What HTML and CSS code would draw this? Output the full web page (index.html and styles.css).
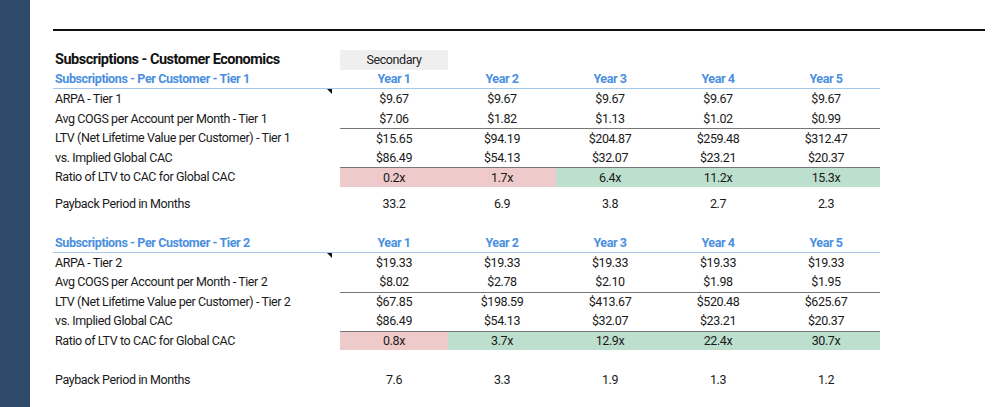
FILE: index.html
```html
<!DOCTYPE html>
<html>
<head>
<meta charset="utf-8">
<link rel="stylesheet" href="styles.css">
</head>
<body>
<div class="app">
  <div class="sidebar"></div>
  <div class="sheet">
    <div class="rule"></div>

    <div class="row title-row">
      <div class="label title">Subscriptions - Customer Economics</div>
      <div class="cell secondary">Secondary</div>
    </div>

    <div class="section">
      <div class="row head">
        <div class="label">Subscriptions - Per Customer - Tier 1</div>
        <div class="cell">Year 1</div><div class="cell">Year 2</div><div class="cell">Year 3</div><div class="cell">Year 4</div><div class="cell">Year 5</div>
      </div>
      <div class="row">
        <div class="label noted">ARPA - Tier 1<span class="note"></span></div>
        <div class="cell">$9.67</div><div class="cell">$9.67</div><div class="cell">$9.67</div><div class="cell">$9.67</div><div class="cell">$9.67</div>
      </div>
      <div class="row">
        <div class="label">Avg COGS per Account per Month - Tier 1</div>
        <div class="cell">$7.06</div><div class="cell">$1.82</div><div class="cell">$1.13</div><div class="cell">$1.02</div><div class="cell">$0.99</div>
      </div>
      <div class="row ruled">
        <div class="label">LTV (Net Lifetime Value per Customer) - Tier 1</div>
        <div class="cell">$15.65</div><div class="cell">$94.19</div><div class="cell">$204.87</div><div class="cell">$259.48</div><div class="cell">$312.47</div>
      </div>
      <div class="row">
        <div class="label">vs. Implied Global CAC</div>
        <div class="cell">$86.49</div><div class="cell">$54.13</div><div class="cell">$32.07</div><div class="cell">$23.21</div><div class="cell">$20.37</div>
      </div>
      <div class="row ruled">
        <div class="label">Ratio of LTV to CAC for Global CAC</div>
        <div class="cell bad">0.2x</div><div class="cell bad">1.7x</div><div class="cell good">6.4x</div><div class="cell good">11.2x</div><div class="cell good">15.3x</div>
      </div>
      <div class="spacer-sm"></div>
      <div class="row">
        <div class="label">Payback Period in Months</div>
        <div class="cell">33.2</div><div class="cell">6.9</div><div class="cell">3.8</div><div class="cell">2.7</div><div class="cell">2.3</div>
      </div>
    </div>

    <div class="spacer"></div>

    <div class="section">
      <div class="row head">
        <div class="label">Subscriptions - Per Customer - Tier 2</div>
        <div class="cell">Year 1</div><div class="cell">Year 2</div><div class="cell">Year 3</div><div class="cell">Year 4</div><div class="cell">Year 5</div>
      </div>
      <div class="row">
        <div class="label noted">ARPA - Tier 2<span class="note"></span></div>
        <div class="cell">$19.33</div><div class="cell">$19.33</div><div class="cell">$19.33</div><div class="cell">$19.33</div><div class="cell">$19.33</div>
      </div>
      <div class="row">
        <div class="label">Avg COGS per Account per Month - Tier 2</div>
        <div class="cell">$8.02</div><div class="cell">$2.78</div><div class="cell">$2.10</div><div class="cell">$1.98</div><div class="cell">$1.95</div>
      </div>
      <div class="row ruled">
        <div class="label">LTV (Net Lifetime Value per Customer) - Tier 2</div>
        <div class="cell">$67.85</div><div class="cell">$198.59</div><div class="cell">$413.67</div><div class="cell">$520.48</div><div class="cell">$625.67</div>
      </div>
      <div class="row">
        <div class="label">vs. Implied Global CAC</div>
        <div class="cell">$86.49</div><div class="cell">$54.13</div><div class="cell">$32.07</div><div class="cell">$23.21</div><div class="cell">$20.37</div>
      </div>
      <div class="row ruled">
        <div class="label">Ratio of LTV to CAC for Global CAC</div>
        <div class="cell bad">0.8x</div><div class="cell good">3.7x</div><div class="cell good">12.9x</div><div class="cell good">22.4x</div><div class="cell good">30.7x</div>
      </div>
      <div class="spacer"></div>
      <div class="row">
        <div class="label">Payback Period in Months</div>
        <div class="cell">7.6</div><div class="cell">3.3</div><div class="cell">1.9</div><div class="cell">1.3</div><div class="cell">1.2</div>
      </div>
    </div>
  </div>
</div>
</body>
</html>
```

FILE: styles.css
```css
html, body {
  margin: 0;
  padding: 0;
  background: #ffffff;
}

.app {
  display: flex;
  height: 407px;
  overflow: hidden;
  font-family: Roboto, "Liberation Sans", Arial, sans-serif;
  font-size: 12.5px;
  letter-spacing: -0.4px;
  color: #1a1a1a;
}

.sidebar {
  width: 30px;
  flex: 0 0 30px;
  background: #2d4a6b;
}

.sheet {
  flex: 1;
  padding: 29px 0 0 23px;
}

.rule {
  width: 932px;
  height: 2px;
  background: #111111;
  margin-bottom: 19px;
}

.row {
  display: grid;
  grid-template-columns: 287px repeat(5, 108px);
  height: 19.5px;
  align-items: stretch;
}

.label {
  padding-left: 2px;
  display: flex;
  align-items: center;
  white-space: nowrap;
  position: relative;
}

.cell {
  display: flex;
  align-items: center;
  justify-content: center;
  white-space: nowrap;
}

.title-row {
  height: 19.5px;
}

.title {
  font-weight: 700;
  font-size: 14.5px;
  letter-spacing: -0.5px;
  color: #111111;
}

.secondary {
  background: #efefef;
  color: #222222;
}

.head {
  font-weight: 700;
  color: #4a8fe0;
  box-sizing: border-box;
  border-bottom: 1px solid #a4c8ec;
  width: 827px;
}

.ruled .cell {
  box-sizing: border-box;
  border-top: 1px solid #777777;
}

.bad {
  background: #eecbca;
}

.good {
  background: #bddfce;
}

.note {
  position: absolute;
  top: 0;
  right: 8px;
  width: 0;
  height: 0;
  border-top: 5px solid #111111;
  border-left: 5px solid transparent;
}

.spacer-sm {
  height: 7.5px;
}

.spacer {
  height: 19.5px;
}
```
